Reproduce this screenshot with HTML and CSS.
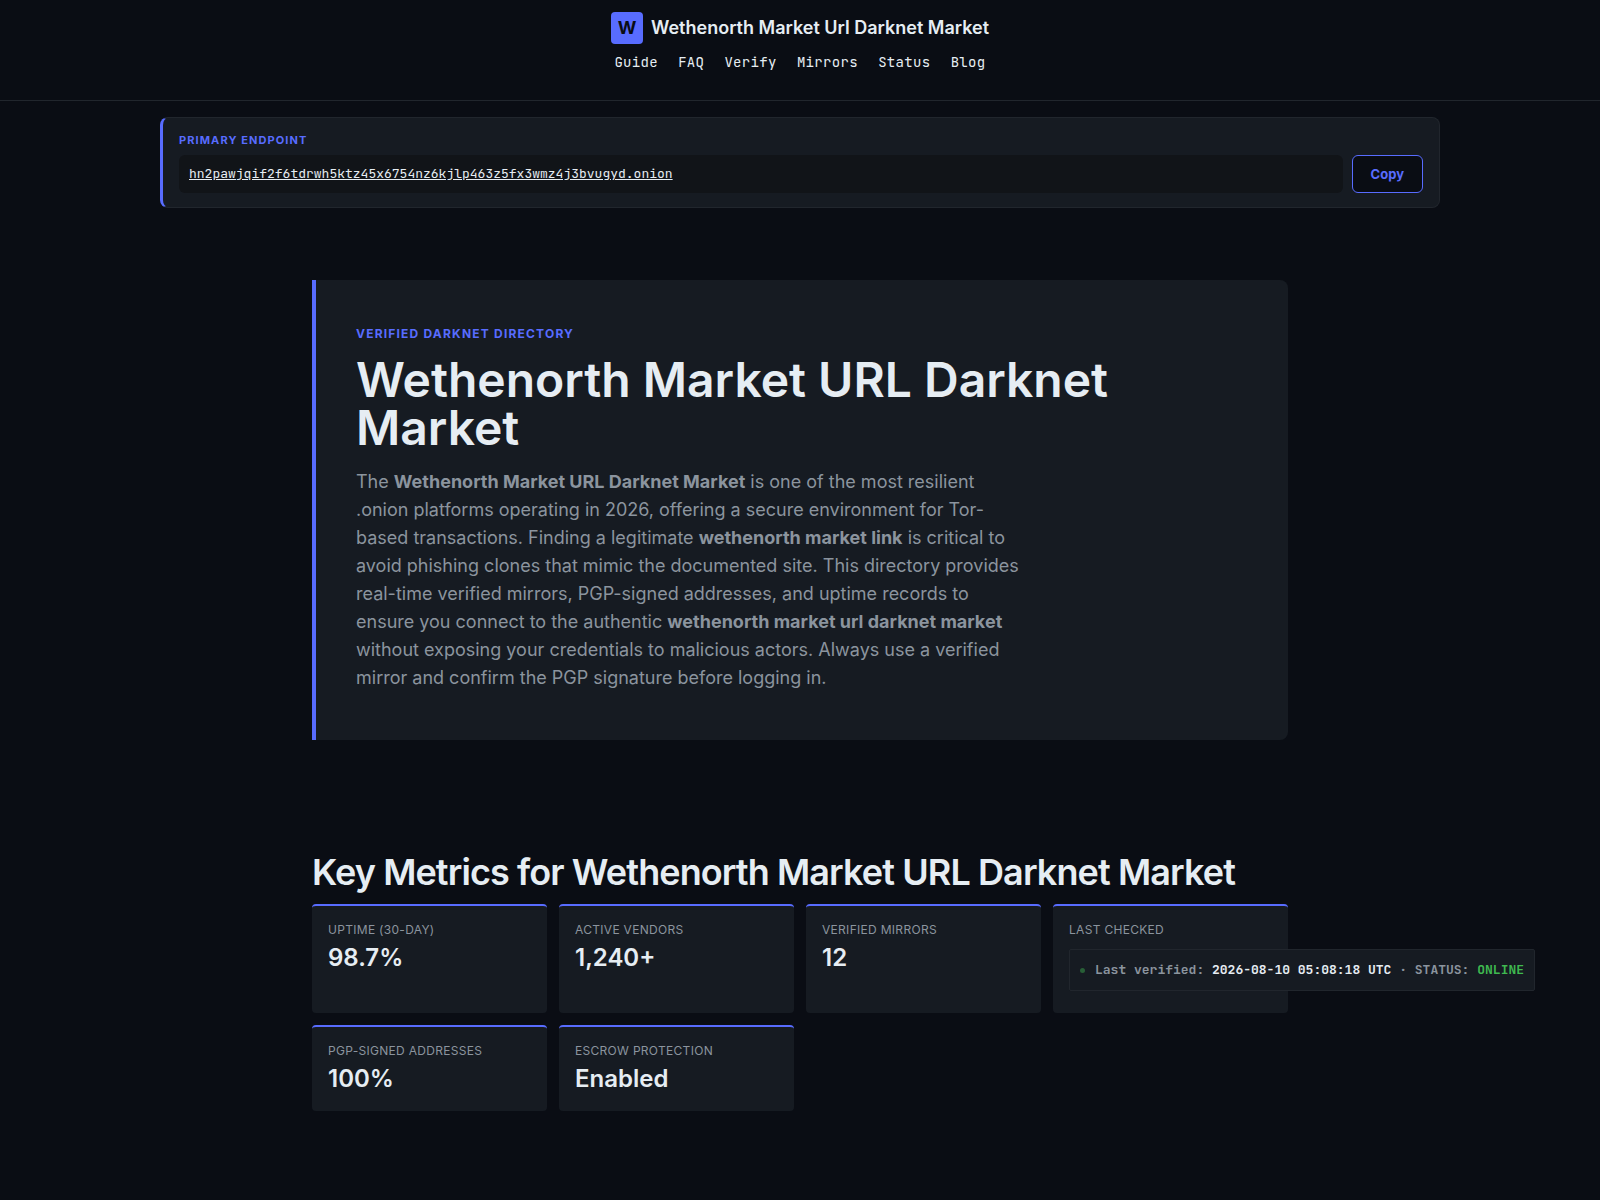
FILE: index.html
```html
<!DOCTYPE html>
<html lang="en">
  <head>
    <meta charset="UTF-8" />
    <meta name="viewport" content="width=device-width, initial-scale=1" />
    <title>Wethenorth Market Url Darknet Market</title>
    <link rel="stylesheet" href="styles.css">
  </head>
  <body>
    <header class="site-header">
      <a class="brand" href="#">
        <span class="brand-mark">W</span>
        <span>Wethenorth Market Url Darknet Market</span>
      </a>
      <nav class="site-nav">
        <a href="#">Guide</a>
        <a href="#">FAQ</a>
        <a href="#">Verify</a>
        <a href="#">Mirrors</a>
        <a href="#">Status</a>
        <a href="#">Blog</a>
      </nav>
    </header>

    <section class="endpoint">
      <div class="endpoint-label">Primary endpoint</div>
      <div class="endpoint-row">
        <div class="endpoint-url">
          <a href="#">hn2pawjqif2f6tdrwh5ktz45x6754nz6kjlp463z5fx3wmz4j3bvugyd.onion</a>
        </div>
        <button class="copy-button" type="button">Copy</button>
      </div>
    </section>

    <main class="container">
      <section class="hero">
        <p class="eyebrow">Verified darknet directory</p>
        <h1>Wethenorth Market URL Darknet Market</h1>
        <p class="lead">
          The <strong>Wethenorth Market URL Darknet Market</strong> is one of
          the most resilient .onion platforms operating in 2026, offering a
          secure environment for Tor-based transactions. Finding a legitimate
          <strong>wethenorth market link</strong> is critical to avoid phishing
          clones that mimic the documented site. This directory provides
          real-time verified mirrors, PGP-signed addresses, and uptime records
          to ensure you connect to the authentic
          <strong>wethenorth market url darknet market</strong> without exposing
          your credentials to malicious actors. Always use a verified mirror and
          confirm the PGP signature before logging in.
        </p>
      </section>

      <section class="metrics">
        <h2>Key Metrics for Wethenorth Market URL Darknet Market</h2>
        <div class="metric-grid">
          <div class="metric">
            <div class="metric-label">Uptime (30-day)</div>
            <div class="metric-value">98.7%</div>
          </div>
          <div class="metric">
            <div class="metric-label">Active vendors</div>
            <div class="metric-value">1,240+</div>
          </div>
          <div class="metric">
            <div class="metric-label">Verified mirrors</div>
            <div class="metric-value">12</div>
          </div>
          <div class="metric">
            <div class="metric-label">Last checked</div>
            <div class="verified">
              <span class="dot"></span>
              <span>Last verified: <time>2026-08-10 05:08:18 UTC</time> · STATUS: <span class="online">ONLINE</span></span>
            </div>
          </div>
          <div class="metric">
            <div class="metric-label">PGP-signed addresses</div>
            <div class="metric-value">100%</div>
          </div>
          <div class="metric">
            <div class="metric-label">Escrow protection</div>
            <div class="metric-value">Enabled</div>
          </div>
        </div>
      </section>
    </main>
  </body>
</html>
```

FILE: styles.css
```css
:root {
  --bg: #0a0d14;
  --surface: #161b22;
  --border: #21262d;
  --accent: #586cff;
  --text: #e6edf3;
  --muted: #8b949e;
  --mono: "JetBrains Mono", "Liberation Mono", monospace;
}

* {
  box-sizing: border-box;
}

body {
  margin: 0;
  background: var(--bg);
  color: var(--text);
  font-family: Inter, "Liberation Sans", sans-serif;
  overflow-x: hidden;
}

a {
  color: inherit;
}

/* header */
.site-header {
  display: flex;
  flex-direction: column;
  align-items: center;
  gap: 8px;
  padding: 12px 16px 28px;
  border-bottom: 1px solid var(--border);
}

.brand {
  display: flex;
  align-items: center;
  gap: 8px;
  font-size: 18px;
  font-weight: 600;
  line-height: 28px;
  text-decoration: none;
}

.brand-mark {
  display: grid;
  place-items: center;
  width: 32px;
  height: 32px;
  border-radius: 4px;
  background: var(--accent);
  color: var(--bg);
  font-weight: 700;
}

.site-nav {
  display: flex;
  gap: 20px;
  font-family: var(--mono);
  font-size: 14px;
  line-height: 20px;
  letter-spacing: 0.025em;
}

.site-nav a {
  text-decoration: none;
}

/* primary endpoint */
.endpoint {
  width: 80%;
  margin: 16px auto 0;
  padding: 14px 16px;
  background: var(--surface);
  border: 1px solid var(--border);
  border-left: 3px solid var(--accent);
  border-radius: 8px;
}

.endpoint-label {
  margin-bottom: 6px;
  color: var(--accent);
  font-size: 11px;
  font-weight: 700;
  line-height: 17px;
  letter-spacing: 0.1em;
  text-transform: uppercase;
}

.endpoint-row {
  display: flex;
  gap: 9px;
}

.endpoint-url {
  flex: 1;
  padding: 9px 10px;
  background: #111418;
  border-radius: 6px;
  font-family: var(--mono);
  font-size: 13px;
  line-height: 20px;
}

.copy-button {
  padding: 0 18px;
  background: var(--bg);
  border: 1px solid var(--accent);
  border-radius: 6px;
  color: var(--accent);
  font: 700 13px Inter, "Liberation Sans", sans-serif;
  cursor: pointer;
}

/* hero */
.container {
  max-width: 1024px;
  margin: 0 auto;
  padding: 72px 24px 80px;
}

.hero {
  padding: 40px 40px 48px;
  background: var(--surface);
  border-left: 4px solid var(--accent);
  border-radius: 0 8px 8px 0;
}

.eyebrow {
  margin: 0 0 8px;
  color: var(--accent);
  font-size: 12px;
  font-weight: 700;
  line-height: 28px;
  letter-spacing: 0.1em;
  text-transform: uppercase;
}

h1 {
  margin: 0 0 16px;
  font-size: 48px;
  font-weight: 600;
  line-height: 48px;
}

.lead {
  max-width: 670px;
  margin: 0;
  color: var(--muted);
  font-size: 18px;
  line-height: 28px;
}

/* metrics */
.metrics {
  margin-top: 112px;
}

h2 {
  margin: 0 0 12px;
  font-size: 36px;
  font-weight: 600;
  line-height: 40px;
  letter-spacing: -0.025em;
}

.metric-grid {
  display: grid;
  grid-template-columns: repeat(4, minmax(0, 1fr));
  gap: 12px;
}

.metric {
  padding: 16px;
  background: var(--surface);
  border-top: 2px solid var(--accent);
  border-radius: 4px;
}

.metric-label {
  margin-bottom: 4px;
  color: var(--muted);
  font-size: 12px;
  line-height: 16px;
  letter-spacing: 0.025em;
  text-transform: uppercase;
}

.metric-value {
  font-size: 24px;
  font-weight: 600;
  line-height: 32px;
}

/* runs past the card on narrow columns */
.verified {
  display: flex;
  align-items: center;
  gap: 10px;
  width: max-content;
  margin: 11px 0 6px;
  padding: 10px;
  background: var(--surface);
  border: 1px solid var(--border);
  border-radius: 2px;
  color: var(--muted);
  font-family: var(--mono);
  font-size: 13px;
  font-weight: 600;
  line-height: 20px;
}

.verified time {
  color: var(--text);
}

.dot {
  width: 5px;
  height: 5px;
  border-radius: 50%;
  background: #285f37;
}

.online {
  color: #3fb950;
}
```
